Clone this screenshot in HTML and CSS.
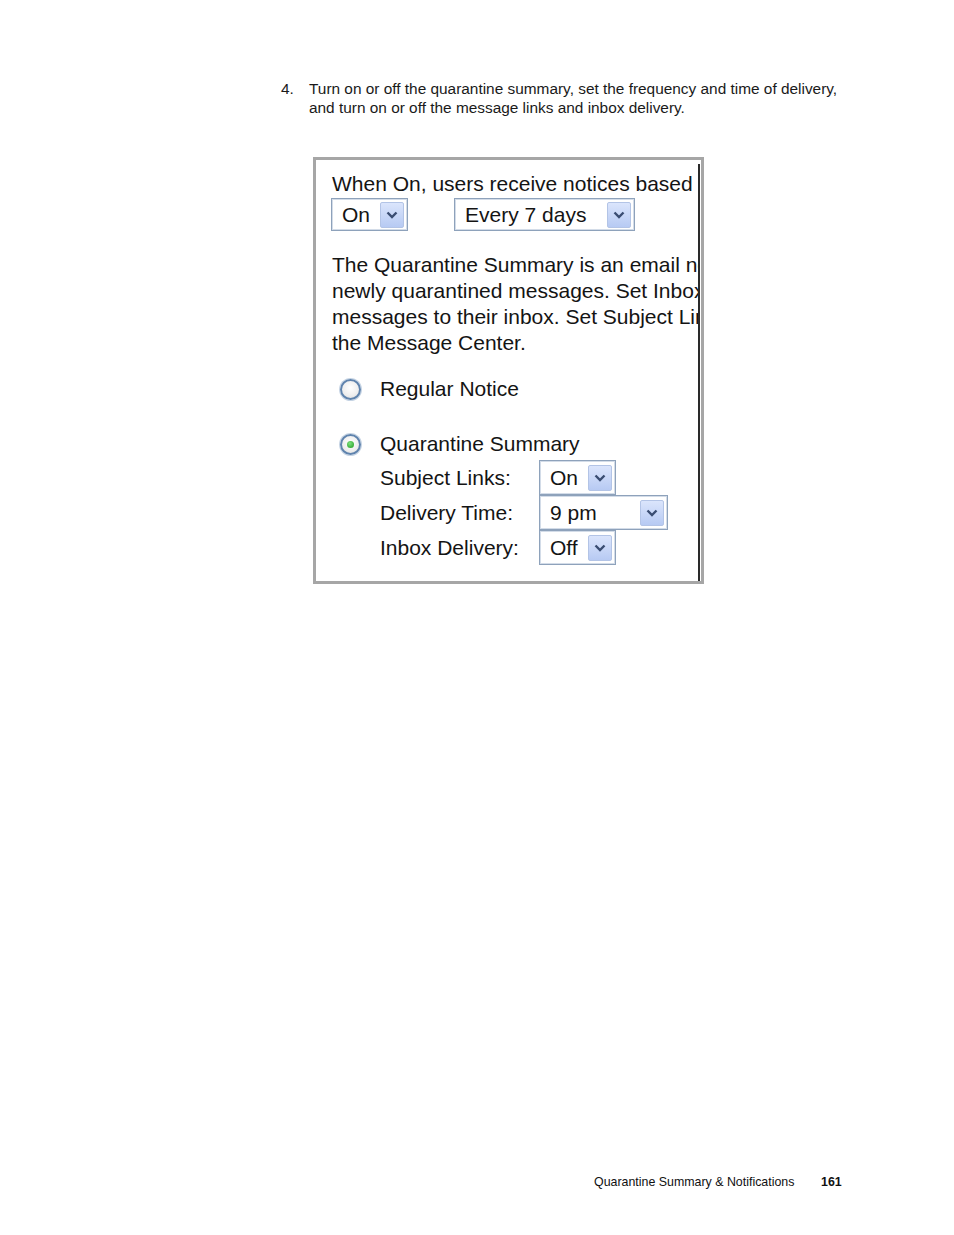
FILE: index.html
```html
<!DOCTYPE html>
<html>
<head>
<meta charset="utf-8">
<link rel="stylesheet" href="styles.css">
</head>
<body>
<div class="page">
  <div class="step">
    <span class="num">4.</span>
    <p class="step-text">Turn on or off the quarantine summary, set the frequency and time of delivery,<br>and turn on or off the message links and inbox delivery.</p>
  </div>

  <div class="frame">
    <div class="inner">
      <div class="line">When On, users receive notices based on the settings below.</div>
      <div class="row-selects">
        <div class="select w-on"><span class="val">On</span><span class="btn"><svg viewBox="0 0 12 8" width="12" height="8"><path d="M1.5 1.5 L6 6 L10.5 1.5" fill="none" stroke="#3a4d72" stroke-width="2.4"/></svg></span></div>
        <div class="select w-days"><span class="val">Every 7 days</span><span class="btn"><svg viewBox="0 0 12 8" width="12" height="8"><path d="M1.5 1.5 L6 6 L10.5 1.5" fill="none" stroke="#3a4d72" stroke-width="2.4"/></svg></span></div>
      </div>
      <p class="para">The Quarantine Summary is an email notification sent to users about<br>newly quarantined messages. Set Inbox Delivery to deliver these<br>messages to their inbox. Set Subject Links to link messages to<br>the Message Center.</p>

      <div class="radio-row first"><span class="radio"></span><span class="rlabel">Regular Notice</span></div>
      <div class="radio-row second"><span class="radio checked"></span><span class="rlabel">Quarantine Summary</span></div>

      <div class="opts">
        <span class="olabel">Subject Links:</span>
        <div class="select w-on"><span class="val">On</span><span class="btn"><svg viewBox="0 0 12 8" width="12" height="8"><path d="M1.5 1.5 L6 6 L10.5 1.5" fill="none" stroke="#3a4d72" stroke-width="2.4"/></svg></span></div>
        <span class="olabel">Delivery Time:</span>
        <div class="select w-time"><span class="val">9 pm</span><span class="btn"><svg viewBox="0 0 12 8" width="12" height="8"><path d="M1.5 1.5 L6 6 L10.5 1.5" fill="none" stroke="#3a4d72" stroke-width="2.4"/></svg></span></div>
        <span class="olabel">Inbox Delivery:</span>
        <div class="select w-on"><span class="val">Off</span><span class="btn"><svg viewBox="0 0 12 8" width="12" height="8"><path d="M1.5 1.5 L6 6 L10.5 1.5" fill="none" stroke="#3a4d72" stroke-width="2.4"/></svg></span></div>
      </div>
    </div>
  </div>

  <div class="footer">
    <span class="ftitle">Quarantine Summary &amp; Notifications</span>
    <span class="fnum">161</span>
  </div>
</div>
</body>
</html>
```

FILE: styles.css
```css
* { box-sizing: border-box; }
html, body { margin: 0; padding: 0; background: #fff; }
body { font-family: "Liberation Sans", Arial, sans-serif; color: #111; }

.page {
  width: 954px;
  height: 1235px;
  display: flex;
  flex-direction: column;
}

.step {
  display: flex;
  margin: 79px 0 0 281px;
  width: 600px;
  font-size: 15.4px;
  line-height: 19px;
  color: #1a1a1a;
}
.num { width: 28px; flex: none; }
.step-text { margin: 0; white-space: nowrap; }

.frame {
  margin: 40px 0 0 313px;
  width: 391px;
  height: 427px;
  border: 3px solid #a6a6a6;
  padding: 4px 1px 0 0;
  display: flex;
  justify-content: flex-start;
}
.inner {
  width: 386px;
  height: 417px;
  border-right: 2px solid #2a2a2a;
  overflow: hidden;
  padding: 7px 0 0 16px;
  font-size: 21px;
  line-height: 26px;
  color: #141414;
  white-space: nowrap;
}
.line { height: 26px; }

.row-selects {
  display: flex;
  gap: 46px;
  margin-top: 1px;
  margin-left: -1px;
}

.select {
  height: 33px;
  border: 1px solid #8ea2bb;
  box-shadow: inset 0 0 0 1px #d3dce8;
  background: #fff;
  display: flex;
  align-items: center;
  justify-content: space-between;
  padding: 0 3px 0 10px;
}
.val { line-height: 26px; }
.btn {
  width: 24px;
  height: 26px;
  border: 1px solid #b3c4e6;
  border-radius: 2px;
  background: linear-gradient(#dbe5fc, #b7caf3);
  display: flex;
  align-items: center;
  justify-content: center;
}
.w-on { width: 77px; }
.w-days { width: 181px; }
.w-time { width: 129px; }

.para {
  margin: 21px 0 0 0;
}

.radio-row {
  display: flex;
  align-items: center;
  height: 26px;
}
.radio-row.first { margin-top: 20px; }
.radio-row.second { margin-top: 29px; }
.radio {
  width: 21px;
  height: 21px;
  border-radius: 50%;
  border: 2px solid #5f83ad;
  box-shadow: 0 0 0 1px #c6d4e4;
  background: radial-gradient(circle at 50% 40%, #ffffff 0%, #eeeeee 60%, #d6d6d6 100%);
  margin: 0 19px 0 8px;
  flex: none;
  display: flex;
  align-items: center;
  justify-content: center;
}
.radio.checked::after {
  content: "";
  width: 7px;
  height: 7px;
  border-radius: 50%;
  background: radial-gradient(circle at 40% 35%, #7ee07e, #1e9a1e);
}

.opts {
  display: grid;
  grid-template-columns: 159px auto;
  grid-auto-rows: 35px;
  align-items: center;
  justify-items: start;
  margin: 3px 0 0 48px;
}
.opts .select { height: 35px; }
.olabel { line-height: 26px; }

.footer {
  margin-top: auto;
  margin-bottom: 46px;
  margin-left: 594px;
  font-size: 12.4px;
  line-height: 14px;
  color: #111;
  display: flex;
}
.ftitle { width: 227px; }
.fnum { font-weight: bold; }
```
